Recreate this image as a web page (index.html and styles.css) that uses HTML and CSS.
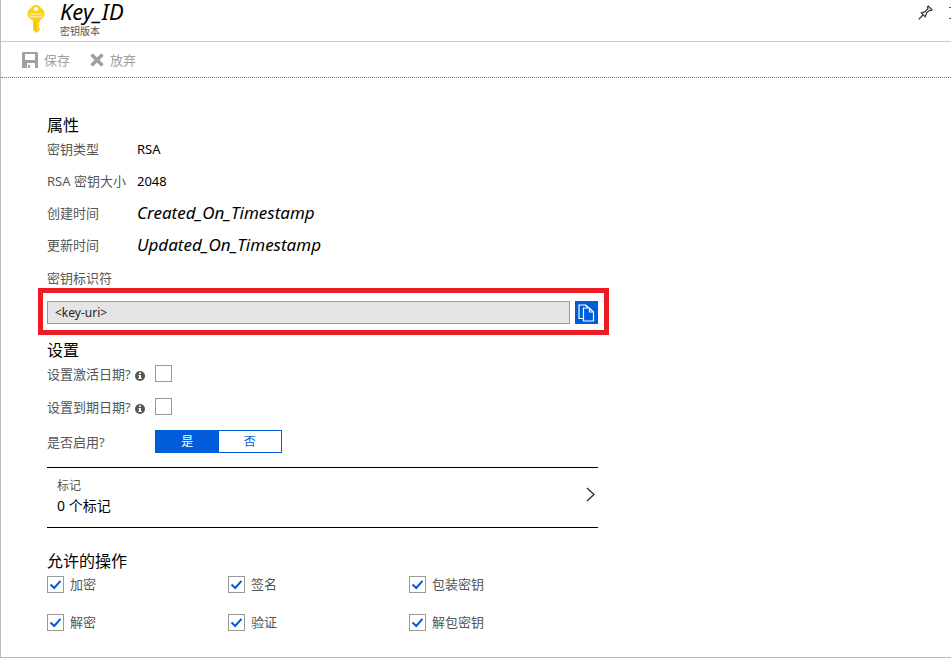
FILE: index.html
```html
<!DOCTYPE html>
<html lang="zh-CN">
<head>
<meta charset="utf-8">
<meta name="viewport" content="width=device-width, initial-scale=1">
<title>Key_ID - 密钥版本</title>
<link rel="stylesheet" href="styles.css">
</head>
<body>
<div class="blade">
  <header class="header">
    <svg class="key-icon" width="18" height="28" viewBox="0 0 18 28" aria-hidden="true">
      <path fill="#fcd116" fill-rule="evenodd" d="M5.500 1.200Q9 -1 12.500 1.200L16.300 5Q19 9 16.300 12.500L12.600 16V17.500L11.500 18.700L12.600 20L11.500 21.500L12.600 23V25L9.200 28L6 25V16L1.700 12.500Q-1 9 1.700 5ZM9 2a2.100 2.100 0 1 0 0 4.200a2.100 2.100 0 1 0 0-4.200Z"/>
      <path fill="#fff" opacity=".6" d="M3 8.500h12v1.300H3zM3 11h12v1.300H3z"/>
      <path fill="#e9b800" d="M7.500 16h1.300v10l-1.300-1z"/>
    </svg>
    <div class="heading">
      <h1 class="title">Key_ID</h1>
      <p class="subtitle">密钥版本</p>
    </div>
    <div class="window-actions">
      <button class="icon-button" type="button" aria-label="固定">
        <svg width="15" height="15" viewBox="0 0 15 15" fill="none" stroke="#333" stroke-width="1.200"><path d="M.7 14.300 5 10M2.800 7.300 7.800 12.300M3.800 8.200Q5.500 6.800 7.200 6.600L10 3.300 9.500 1.700 10.300 1 14 4.700 13.200 5.500 11.700 5.100 8.500 8Q8.400 9.800 7 11.400"/></svg>
      </button>
      <button class="icon-button clipped" type="button" aria-label="最大化">
        <svg width="12" height="12" viewBox="0 0 12 12" fill="none" stroke="#555"><path d="M0 .5h11.500v11H0"/></svg>
      </button>
    </div>
  </header>

  <div class="toolbar">
    <button class="command" type="button" disabled>
      <svg width="16" height="16" viewBox="0 0 16 16" fill="#a0a0a0" fill-rule="evenodd" aria-hidden="true"><path d="M1 0h14l1 1v15h-3v-5H5v5H0V1zM3 2v6h10V2zM6 13h2v3H6z"/></svg>
      <span>保存</span>
    </button>
    <button class="command" type="button" disabled>
      <svg width="14" height="14" viewBox="0 0 14 14" stroke="#a0a0a0" stroke-width="3.500" aria-hidden="true"><path d="M1.500 1.500 12.500 12.500M12.500 1.500 1.500 12.500"/></svg>
      <span>放弃</span>
    </button>
  </div>

  <main class="content">
    <section>
      <h2 class="section-title">属性</h2>
      <dl class="properties">
        <div class="property"><dt>密钥类型</dt><dd>RSA</dd></div>
        <div class="property"><dt>RSA 密钥大小</dt><dd>2048</dd></div>
        <div class="property"><dt>创建时间</dt><dd class="stamp">Created_On_Timestamp</dd></div>
        <div class="property"><dt>更新时间</dt><dd class="stamp">Updated_On_Timestamp</dd></div>
      </dl>
      <label class="field-label" for="key-uri">密钥标识符</label>
      <div class="highlight">
        <input class="uri" id="key-uri" type="text" value="&lt;key-uri&gt;" readonly>
        <button class="copy" type="button" aria-label="复制">
          <svg width="17" height="18" viewBox="0 0 17 18" fill="none" stroke="#fff" stroke-width="1.200" aria-hidden="true"><path d="M5 14.500H1V1h6.500L10 3.500M5.500 4H11.500L15.500 8V17H5.500ZM11.500 4V8H15.500"/><path d="M7.500 1 11.500 4.500" opacity=".7"/></svg>
        </button>
      </div>
    </section>

    <section class="settings">
      <h2 class="section-title">设置</h2>
      <div class="setting">
        <label class="setting-label" for="activate">设置激活日期?
          <svg class="info" width="10" height="10" viewBox="0 0 10 10" aria-hidden="true"><circle cx="5" cy="5" r="5" fill="#555"/><path fill="#fff" d="M4 1.500h2V3H4zM3.500 4H6v3h.7v1H3.300V7H4V5h-.5z"/></svg>
        </label>
        <input class="check" id="activate" type="checkbox">
      </div>
      <div class="setting">
        <label class="setting-label" for="expire">设置到期日期?
          <svg class="info" width="10" height="10" viewBox="0 0 10 10" aria-hidden="true"><circle cx="5" cy="5" r="5" fill="#555"/><path fill="#fff" d="M4 1.500h2V3H4zM3.500 4H6v3h.7v1H3.300V7H4V5h-.5z"/></svg>
        </label>
        <input class="check" id="expire" type="checkbox">
      </div>
      <div class="setting enabled">
        <span class="setting-label" id="enabled">是否启用?</span>
        <div class="toggle" role="group" aria-labelledby="enabled">
          <button class="option selected" type="button" aria-pressed="true">是</button>
          <button class="option" type="button" aria-pressed="false">否</button>
        </div>
      </div>
    </section>

    <button class="tags" type="button">
      <span class="tags-text">
        <span class="tags-label">标记</span>
        <span class="tags-count">0 个标记</span>
      </span>
      <svg width="9" height="15" viewBox="0 0 9 15" fill="none" stroke="#222" stroke-width="1.200" aria-hidden="true"><path d="M1 1 8 7.500 1 14"/></svg>
    </button>

    <section>
      <h2 class="section-title">允许的操作</h2>
      <div class="operations">
        <label class="operation"><input class="check" type="checkbox" checked>加密</label>
        <label class="operation"><input class="check" type="checkbox" checked>签名</label>
        <label class="operation"><input class="check" type="checkbox" checked>包装密钥</label>
        <label class="operation"><input class="check" type="checkbox" checked>解密</label>
        <label class="operation"><input class="check" type="checkbox" checked>验证</label>
        <label class="operation"><input class="check" type="checkbox" checked>解包密钥</label>
      </div>
    </section>
  </main>
</div>
</body>
</html>
```
FILE: styles.css
```css
* {
  box-sizing: border-box;
}

body,
h1,
h2,
p,
dl,
dd {
  margin: 0;
}

body {
  background: #fff;
  color: #555;
  font: 13px/20px "Noto Sans", "Noto Sans CJK SC", sans-serif;
  overflow-x: hidden;
}

button,
input {
  font: inherit;
  margin: 0;
}

button {
  padding: 0;
  border: 0;
  background: none;
  color: inherit;
}

svg {
  display: block;
  flex: none;
}

.blade {
  min-height: 100vh;
  border: solid #bbb;
  border-width: 0 0 1px 1px;
}

.header {
  display: flex;
  height: 42px;
  padding-left: 26px;
  border-bottom: 1px solid #ccc;
}

.key-icon {
  margin-top: 5px;
}

.heading {
  flex: 1;
  margin-left: 15px;
}

.title {
  color: #000;
  font-size: 22px;
  font-style: italic;
  font-weight: 400;
  line-height: 22px;
}

.subtitle {
  font-size: 10px;
  line-height: 18px;
}

.window-actions {
  display: flex;
  gap: 16px;
  padding-top: 5px;
}

.icon-button {
  height: 15px;
}

.clipped {
  width: 2px;
  overflow: hidden;
}

.toolbar {
  display: flex;
  align-items: center;
  gap: 20px;
  height: 36px;
  padding-left: 21px;
  border-bottom: 1px dotted #00abec;
}

.command {
  display: flex;
  align-items: center;
  gap: 6px;
  color: #a0a0a0;
}

.content {
  max-width: 597px;
  padding: 39px 0 24px 46px;
}

.section-title {
  color: #000;
  font-size: 16px;
  font-weight: 400;
  line-height: 16px;
}

.property {
  display: flex;
  align-items: center;
  height: 32px;
}

.property dt {
  width: 90px;
  white-space: nowrap;
}

.property dd {
  color: #000;
  font-size: 13px;
}

.property .stamp {
  font-size: 17px;
  font-style: italic;
}

.field-label {
  display: block;
  margin-top: 7px;
}

.highlight {
  display: flex;
  gap: 5px;
  margin: 0 -11px 0 -9px;
  padding: 8px 6px 6px 4px;
  border: 5px solid #ed1c24;
}

.uri {
  flex: 1;
  min-width: 0;
  height: 23px;
  padding: 0 7px;
  border: 1px solid #999;
  border-radius: 0;
  background: #e5e5e5;
  color: #222;
  font-size: 12px;
}

.copy {
  display: grid;
  place-items: center;
  width: 23px;
  height: 23px;
  background: #015cda;
}

.settings {
  margin-top: 8px;
}

.settings .section-title {
  line-height: 14px;
}

.setting {
  display: flex;
  align-items: center;
  height: 33px;
}

.setting.enabled {
  height: 37px;
}

.setting-label {
  display: flex;
  align-items: center;
  gap: 4px;
  width: 108px;
}

.info {
  margin-top: 4px;
}

.check {
  appearance: none;
  flex: none;
  width: 17px;
  height: 17px;
  border: 1px solid #999;
  border-radius: 0;
  background: #fff;
}

.check:checked {
  background: #fff url("data:image/svg+xml,%3Csvg xmlns='http://www.w3.org/2000/svg' viewBox='0 0 15 15'%3E%3Cpath d='M2.500 7.500 6.200 11 12.500 3.800' fill='none' stroke='%23015cda' stroke-width='2'/%3E%3C/svg%3E") center / 15px 15px;
}

.toggle {
  display: flex;
  width: 127px;
  height: 23px;
  border: 1px solid #015cda;
}

.option {
  flex: 1;
  color: #015cda;
  font-size: 12px;
}

.option.selected {
  background: #015cda;
  color: #fff;
}

.tags {
  display: flex;
  align-items: center;
  justify-content: space-between;
  width: 100%;
  height: 61px;
  margin: 7px 0 25px;
  padding: 0 3px 6px 10px;
  border: solid #000;
  border-width: 1px 0;
  text-align: left;
}

.tags-text {
  display: grid;
  padding-top: 2px;
}

.tags-label {
  font-size: 12px;
}

.tags-count {
  color: #000;
  font-size: 14px;
}

.operations {
  display: grid;
  grid-template-columns: repeat(3, 1fr);
  gap: 18px 0;
  max-width: 543px;
  margin-top: 5px;
}

.operation {
  display: flex;
  align-items: center;
  gap: 6px;
}
```
